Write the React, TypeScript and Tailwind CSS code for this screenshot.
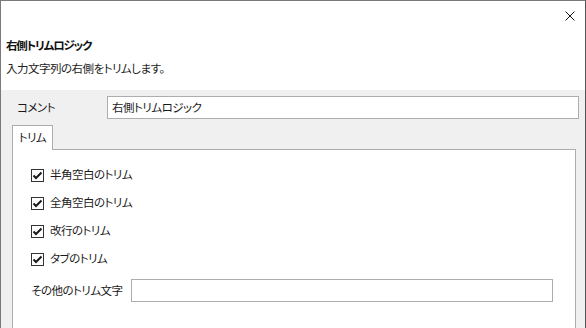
import React from "react";

const font = "font-['Yu_Gothic_UI','Noto_Sans_CJK_JP',sans-serif] [font-feature-settings:'palt'] tracking-[-0.5px]";

function Check({ label }: { label: string }) {
  return (
    <div className="flex items-center h-[28px]">
      <div className="w-[13px] h-[13px] border border-[#333333] bg-white flex items-center justify-center">
        <svg width="11" height="11" viewBox="0 0 11 11">
          <path d="M1.5 5.5 L4 8 L9.5 2.5" fill="none" stroke="#1a1a1a" strokeWidth="2" />
        </svg>
      </div>
      <span className="ml-[6px] text-[11.5px] text-[#1a1a1a]">{label}</span>
    </div>
  );
}

export default function App() {
  return (
    <div className={`w-[586px] h-[328px] overflow-hidden bg-[#f0f0f0] border-l border-t border-r border-l-[#7a7a7a] border-t-[#7a7a7a] border-r-[#555555] ${font}`}>
      <div className="relative h-[89px] bg-white pl-[5px]">
        <svg className="absolute right-[10px] top-[10px]" width="10" height="10" viewBox="0 0 10 10">
          <path d="M0.5 0.5 L9.5 9.5 M9.5 0.5 L0.5 9.5" stroke="#111" strokeWidth="1" />
        </svg>
        <div className="pt-[36px] text-[11.5px] font-bold text-[#111] leading-[16px] tracking-[-1.2px]">右側トリムロジック</div>
        <div className="mt-[7px] text-[11.5px] text-[#222] leading-[16px]">入力文字列の右側をトリムします。</div>
      </div>
      <div className="flex items-center mt-[6px] pl-[16px] h-[23px]">
        <span className="w-[90px] flex-none text-[11.5px] text-[#1a1a1a]">コメント</span>
        <div className="w-[472px] flex-none h-[23px] bg-white border border-[#adadad] flex items-center pl-[4px] text-[11.5px] text-[#1a1a1a]">
          右側トリムロジック
        </div>
      </div>
      <div className="ml-[11px] mt-[6px]">
        <div className="w-[41px] h-[25px] bg-white border border-b-0 border-[#adadad] flex items-center justify-center text-[11.5px] text-[#1a1a1a] relative z-10 -mb-px">
          トリム
        </div>
        <div className="w-[564px] h-[200px] bg-white border border-[#adadad] pt-[11px] pl-[18px]">
          <Check label="半角空白のトリム" />
          <Check label="全角空白のトリム" />
          <Check label="改行のトリム" />
          <Check label="タブのトリム" />
          <div className="flex items-center mt-[6px] h-[23px]">
            <span className="w-[100px] flex-none whitespace-nowrap text-[11.5px] text-[#1a1a1a]">その他のトリム文字</span>
            <div className="w-[422px] flex-none h-[23px] bg-white border border-[#adadad]" />
          </div>
        </div>
      </div>
    </div>
  );
}
